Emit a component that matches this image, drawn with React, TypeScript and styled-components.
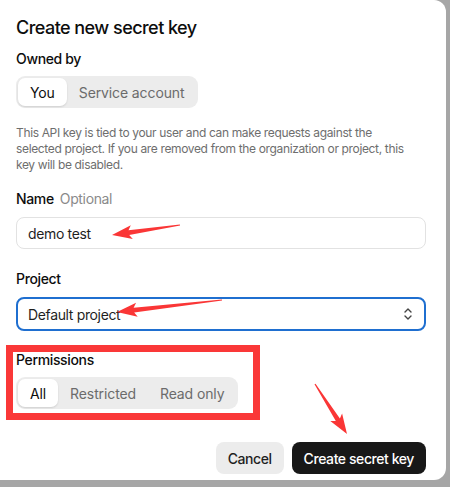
import React from "react";
import styled, { createGlobalStyle } from "styled-components";

const GlobalStyle = createGlobalStyle`
    html, body {
        margin: 0;
        padding: 0;
        background: #a6a6a6;
        font-family: Inter, "Noto Sans", "Liberation Sans", sans-serif;
        letter-spacing: -0.022em;
        -webkit-font-smoothing: antialiased;
    }
`

const Stage = styled.div`
    position: relative;
    width: 450px;
    height: 487px;
    overflow: hidden;
`

const Dialog = styled.div`
    width: 446px;
    height: 480px;
    box-sizing: border-box;
    background: #ffffff;
    border-radius: 0 12px 12px 0;
    padding: 16px 20px 0 16px;
    display: flex;
    flex-direction: column;
    color: #0d0d0d;
`

const Title = styled.h2`
    margin: 0;
    font-size: 18px;
    line-height: 24px;
    font-weight: 500;
    letter-spacing: -0.03em;
`

const Label = styled.div<{ $gap?: number }>`
    margin-top: ${p => p.$gap ?? 0}px;
    font-size: 14px;
    line-height: 20px;
    font-weight: 500;
    display: flex;
    gap: 6px;
`

const Hint = styled.span`
    font-weight: 400;
    color: #8a8a8a;
`

const Segmented = styled.div`
    margin-top: 7px;
    align-self: flex-start;
    display: flex;
    padding: 2px;
    height: 32px;
    box-sizing: border-box;
    background: #ececec;
    border-radius: 9px;
`

const Segment = styled.div<{ $active?: boolean }>`
    display: flex;
    align-items: center;
    padding: 0 12px;
    font-size: 14px;
    letter-spacing: -0.008em;
    border-radius: 7px;
    color: ${p => (p.$active ? "#0d0d0d" : "#6b6b6b")};
    background: ${p => (p.$active ? "#ffffff" : "transparent")};
    box-shadow: ${p => (p.$active ? "0 1px 2px rgba(0,0,0,0.12)" : "none")};
`

const Description = styled.p`
    margin: 17px 0 0;
    font-size: 12px;
    line-height: 16px;
    color: #6e6e6e;
    white-space: nowrap;
`

const Field = styled.div<{ $focused?: boolean }>`
    margin-top: 8px;
    height: ${p => (p.$focused ? 34 : 32)}px;
    box-sizing: border-box;
    border: ${p => (p.$focused ? "2px solid #1f6fd0" : "1px solid #e2e2e2")};
    border-radius: 8px;
    padding: 0 ${p => (p.$focused ? 10 : 11)}px;
    display: flex;
    align-items: center;
    justify-content: space-between;
    font-size: 14px;
    color: #1f1f1f;
`

const Footer = styled.div`
    margin-top: 33px;
    display: flex;
    justify-content: flex-end;
    gap: 8px;
`

const Button = styled.button<{ $primary?: boolean }>`
    height: 32px;
    padding: 0 12px;
    border: none;
    border-radius: 8px;
    font-family: inherit;
    letter-spacing: -0.03em;
    font-size: 14px;
    font-weight: 500;
    background: ${p => (p.$primary ? "#181818" : "#ececec")};
    color: ${p => (p.$primary ? "#ffffff" : "#1f1f1f")};
`

const Highlight = styled.div`
    position: absolute;
    left: 6px;
    top: 345px;
    width: 254px;
    height: 75px;
    box-sizing: border-box;
    border: 7px solid #fa3838;
    pointer-events: none;
`

const Marks = styled.svg`
    position: absolute;
    inset: 0;
    pointer-events: none;
`

// tapered pointer arrow from tail to tip
function arrowPoints(x1: number, y1: number, x2: number, y2: number) {
    const dx = x2 - x1;
    const dy = y2 - y1;
    const len = Math.hypot(dx, dy);
    const ux = dx / len;
    const uy = dy / len;
    const nx = -uy;
    const ny = ux;
    const headLen = 17;
    const bx = x2 - ux * headLen;
    const by = y2 - uy * headLen;
    const sx = bx - ux * 3;
    const sy = by - uy * 3;
    const pts: [number, number][] = [
        [x1 + nx * 0.6, y1 + ny * 0.6],
        [bx + nx * 2.4, by + ny * 2.4],
        [sx + nx * 7, sy + ny * 7],
        [x2, y2],
        [sx - nx * 7, sy - ny * 7],
        [bx - nx * 2.4, by - ny * 2.4],
        [x1 - nx * 0.6, y1 - ny * 0.6],
    ];
    return pts.map(([x, y]) => `${x.toFixed(1)},${y.toFixed(1)}`).join(" ");
}

const arrows = [
    [180, 225, 112, 235],
    [222, 300, 117, 312],
    [315, 384, 347, 434],
];

const UpDown = () => (
    <svg width="12" height="14" viewBox="0 0 12 14" fill="none" stroke="#444" strokeWidth="1.4" strokeLinecap="round" strokeLinejoin="round">
        <path d="M3 5 L6 2 L9 5" />
        <path d="M3 9 L6 12 L9 9" />
    </svg>
)

export default function App() {
    return (
        <>
            <GlobalStyle />
            <Stage>
                <Dialog>
                    <Title>Create new secret key</Title>
                    <Label $gap={9}>Owned by</Label>
                    <Segmented>
                        <Segment $active>You</Segment>
                        <Segment>Service account</Segment>
                    </Segmented>
                    <Description>
                        This API key is tied to your user and can make requests against the<br />
                        selected project. If you are removed from the organization or project, this<br />
                        key will be disabled.
                    </Description>
                    <Label $gap={16}>Name <Hint>Optional</Hint></Label>
                    <Field>demo test</Field>
                    <Label $gap={20}>Project</Label>
                    <Field $focused>
                        <span>Default project</span>
                        <UpDown />
                    </Field>
                    <Label $gap={19}>Permissions</Label>
                    <Segmented>
                        <Segment $active>All</Segment>
                        <Segment>Restricted</Segment>
                        <Segment>Read only</Segment>
                    </Segmented>
                    <Footer>
                        <Button>Cancel</Button>
                        <Button $primary>Create secret key</Button>
                    </Footer>
                </Dialog>
                <Highlight />
                <Marks width="450" height="487" viewBox="0 0 450 487">
                    {arrows.map(([a, b, c, d], i) => (
                        <polygon key={i} points={arrowPoints(a, b, c, d)} fill="#fa3636" />
                    ))}
                </Marks>
            </Stage>
        </>
    )
}
